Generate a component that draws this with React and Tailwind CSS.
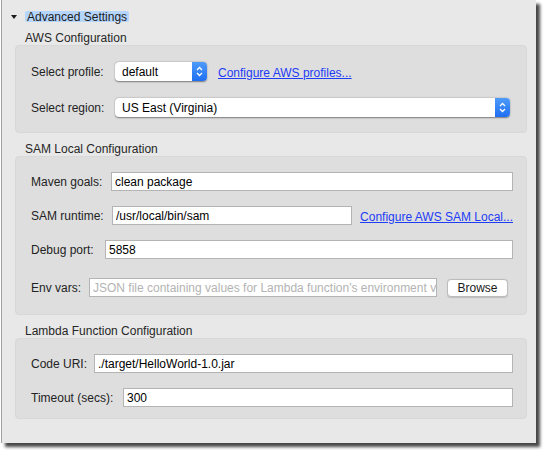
// Advanced settings pane of a run configuration dialog (macOS look).
const font = { fontFamily: '"Liberation Sans", Arial, sans-serif' }

function Stepper() {
  return (
    <span className="flex h-full w-[15px] shrink-0 items-center justify-center rounded-r-[4px] bg-gradient-to-b from-[#4d9bfa] to-[#1f6ef2]">
      <svg width="7" height="11" viewBox="0 0 7 11" fill="none" stroke="white" strokeWidth="1.3">
        <path d="M1 4 L3.5 1.5 L6 4" />
        <path d="M1 7 L3.5 9.5 L6 7" />
      </svg>
    </span>
  )
}

function Select({ value, className }) {
  return (
    <div
      className={`flex h-[19px] items-center rounded-[4px] bg-white shadow-[0_0.5px_1.5px_rgba(0,0,0,0.45)] ${className}`}
    >
      <span className="flex-1 pl-[7px] text-[12px] leading-none text-black">{value}</span>
      <Stepper />
    </div>
  )
}

// plain text field; the placeholder clips inside the box like the native one
function Field({ value, placeholder, className }) {
  return (
    <input
      readOnly
      defaultValue={value}
      placeholder={placeholder}
      className={`h-[19px] min-w-0 border border-[#b4b4b4] bg-white pl-[3px] text-[12px] leading-none text-black outline-none placeholder:text-[#b3b3b3] ${className}`}
    />
  )
}

function Link({ children }) {
  return (
    <a className="cursor-pointer whitespace-nowrap text-[12px] leading-none text-[#1d3cf5] underline">{children}</a>
  )
}

function Label({ children, w }) {
  return <span className={`shrink-0 text-[12px] leading-none text-[#232323] ${w}`}>{children}</span>
}

function Heading({ children, className = '' }) {
  return (
    <div className={`flex h-[14px] items-center pl-[10px] text-[12px] leading-none text-[#262626] ${className}`}>
      {children}
    </div>
  )
}

function Group({ children, className = '' }) {
  return (
    <div className={`flex flex-col rounded-[4px] border border-[#d8d8d8] bg-[#dedede] pl-[15px] pr-[13px] ${className}`}>
      {children}
    </div>
  )
}

export default function App() {
  return (
    <div className="min-h-[454px] w-[546px] bg-white pl-[1px]" style={font}>
      <div className="flex h-[443px] w-[535px] flex-col border-l border-[#a2a2a2] bg-[#e8e8e8] pl-[13px] pr-[9px] shadow-[4px_4px_3px_rgba(0,0,0,0.72)]">
        {/* Disclosure header */}
        <div className="mt-[11px] flex h-[11px] items-center">
          <span className="ml-[-4px] mr-[8px] h-0 w-0 border-x-[3px] border-t-[4px] border-x-transparent border-t-[#1a1a1a]" />
          <span className="flex h-[11px] items-center rounded-[2px] bg-[#b5d5fd] px-[2px] text-[12px] leading-none text-[#1c1c1c]">
            Advanced Settings
          </span>
        </div>

        <Heading className="mt-[9px]">AWS Configuration</Heading>
        <Group className="h-[88px] pt-[16px]">
          <div className="flex h-[19px] items-center">
            <Label w="w-[84px]">Select profile:</Label>
            <Select value="default" className="w-[92px]" />
            <span className="ml-[11px]">
              <Link>Configure AWS profiles...</Link>
            </span>
          </div>
          <div className="mt-[17px] flex h-[19px] items-center">
            <Label w="w-[84px]">Select region:</Label>
            <Select value="US East (Virginia)" className="w-[395px]" />
          </div>
        </Group>

        <Heading className="mt-[9px]">SAM Local Configuration</Heading>
        <Group className="h-[159px] pt-[15px]">
          <div className="flex h-[19px] items-center">
            <Label w="w-[80px]">Maven goals:</Label>
            <Field value="clean package" className="flex-1" />
          </div>
          <div className="mt-[15px] flex h-[19px] items-center">
            <Label w="w-[81px]">SAM runtime:</Label>
            <Field value="/usr/local/bin/sam" className="w-[242px]" />
            <span className="ml-[8px]">
              <Link>Configure AWS SAM Local...</Link>
            </span>
          </div>
          <div className="mt-[15px] flex h-[19px] items-center">
            <Label w="w-[74px]">Debug port:</Label>
            <Field value="5858" className="flex-1" />
          </div>
          <div className="mt-[19px] flex h-[19px] items-center">
            <Label w="w-[58px]">Env vars:</Label>
            <Field
              placeholder="JSON file containing values for Lambda function's environment variables"
              className="w-[348px]"
            />
            <button className="ml-[10px] flex h-[18px] w-[61px] items-center justify-center rounded-[4px] border border-[#bcbcbc] bg-white text-[12px] leading-none text-[#1a1a1a] shadow-[0_0.5px_1px_rgba(0,0,0,0.15)]">
              Browse
            </button>
          </div>
        </Group>

        <Heading className="mt-[9px]">Lambda Function Configuration</Heading>
        <Group className="h-[81px] pt-[15px]">
          <div className="flex h-[19px] items-center">
            <Label w="w-[63px]">Code URI:</Label>
            <Field value="./target/HelloWorld-1.0.jar" className="flex-1" />
          </div>
          <div className="mt-[15px] flex h-[19px] items-center">
            <Label w="w-[92px]">Timeout (secs):</Label>
            <Field value="300" className="flex-1" />
          </div>
        </Group>
      </div>
    </div>
  )
}
